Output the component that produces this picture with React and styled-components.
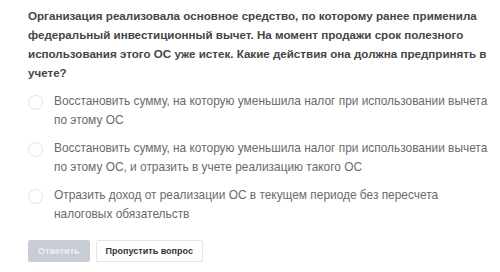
import React, { useState } from "react";
import styled, { createGlobalStyle } from "styled-components";

const GlobalStyle = createGlobalStyle`
  body {
    margin: 0;
    background: #ffffff;
    font-family: "Liberation Sans", Arial, sans-serif;
  }
`;

const Page = styled.div`
  width: 500px;
  height: 272px;
  box-sizing: border-box;
  padding: 6px 10px 0 28px;
  background: #ffffff;
`;

const Question = styled.div`
  font-size: 11.6px;
  font-weight: 700;
  line-height: 19px;
  color: #454545;
  white-space: nowrap;
`;

const Options = styled.div`
  display: flex;
  flex-direction: column;
  gap: 9px;
  margin-top: 10px;
`;

const Option = styled.label`
  display: flex;
  align-items: flex-start;
  cursor: pointer;
`;

const Radio = styled.span`
  flex: none;
  width: 13px;
  height: 13px;
  margin-top: 3px;
  margin-right: 11px;
  border-radius: 50%;
  border: 1px solid ${(p) => (p.checked ? "#9aa3b3" : "#e2e2e2")};
  background: #ffffff;
`;

const OptionText = styled.div`
  font-size: 11.9px;
  line-height: 19px;
  color: #6a6a6a;
  white-space: nowrap;
`;

const Actions = styled.div`
  display: flex;
  gap: 6px;
  margin-top: 16px;
`;

const Button = styled.button`
  height: 22px;
  box-sizing: border-box;
  padding: 0 ${(p) => (p.primary ? "9px" : "9px")};
  border-radius: 2px;
  font-family: "Liberation Sans", Arial, sans-serif;
  font-size: 9px;
  font-weight: 700;
  cursor: pointer;
  border: 1px solid ${(p) => (p.primary ? "#c7ccd5" : "#e4e4e4")};
  background: ${(p) => (p.primary ? "#c7ccd5" : "#ffffff")};
  color: ${(p) => (p.primary ? "#eef0f4" : "#333333")};
`;

const options = [
  ["Восстановить сумму, на которую уменьшила налог при использовании вычета", "по этому ОС"],
  [
    "Восстановить сумму, на которую уменьшила налог при использовании вычета",
    "по этому ОС, и отразить в учете реализацию такого ОС",
  ],
  ["Отразить доход от реализации ОС в текущем периоде без пересчета", "налоговых обязательств"],
];

export default function App() {
  const [selected, setSelected] = useState(null);
  return (
    <Page>
      <GlobalStyle />
      <Question>
        Организация реализовала основное средство, по которому ранее применила
        <br />
        федеральный инвестиционный вычет. На момент продажи срок полезного
        <br />
        использования этого ОС уже истек. Какие действия она должна предпринять в
        <br />
        учете?
      </Question>
      <Options>
        {options.map((lines, i) => (
          <Option key={i} onClick={() => setSelected(i)}>
            <Radio checked={selected === i} />
            <OptionText>
              {lines[0]}
              <br />
              {lines[1]}
            </OptionText>
          </Option>
        ))}
      </Options>
      <Actions>
        <Button primary disabled={selected === null}>
          Ответить
        </Button>
        <Button>Пропустить вопрос</Button>
      </Actions>
    </Page>
  );
}
